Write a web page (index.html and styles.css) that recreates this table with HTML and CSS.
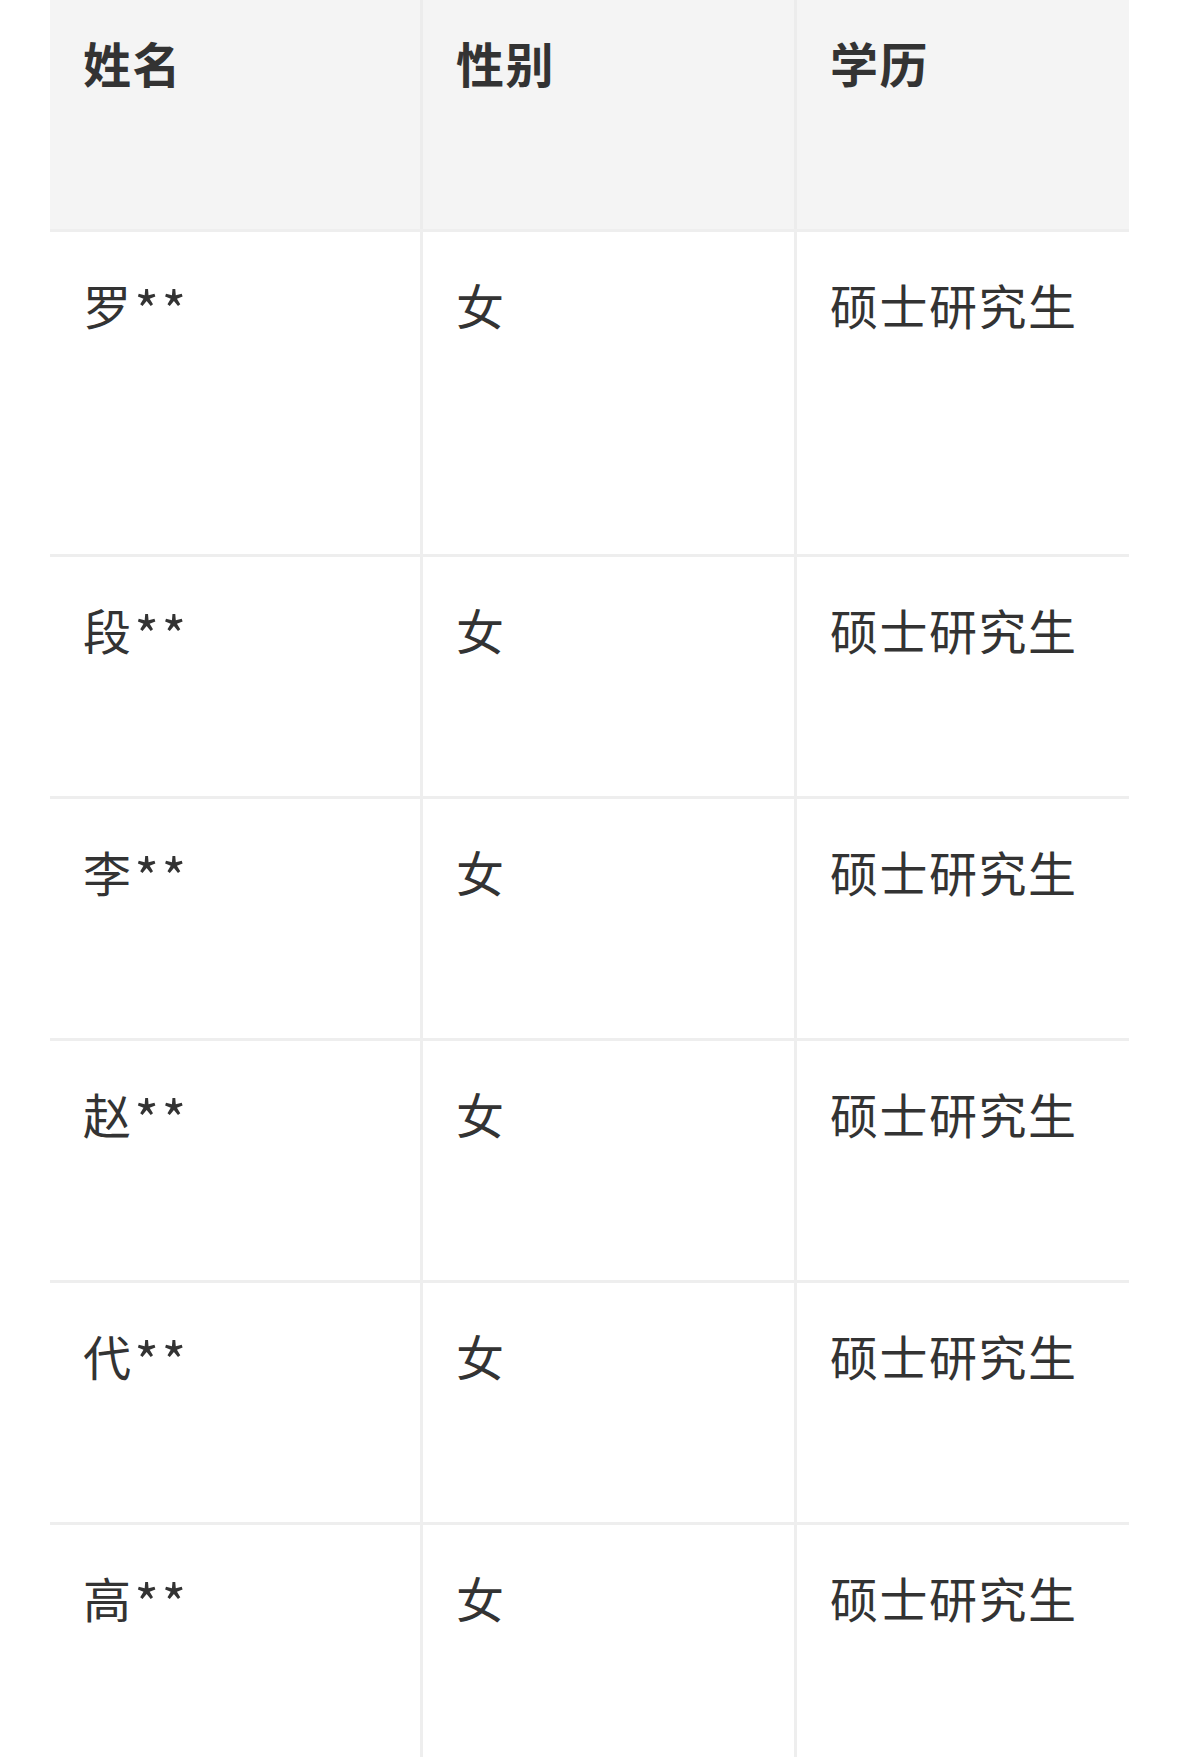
FILE: index.html
```html
<!DOCTYPE html>
<html lang="zh-CN">
<head>
<meta charset="utf-8">
<title>名单</title>
<link rel="stylesheet" href="styles.css">
</head>
<body>
<div class="page">
  <div class="table" role="table">
    <div class="row head" role="row">
      <div class="cell" role="columnheader">姓名</div>
      <div class="cell" role="columnheader">性别</div>
      <div class="cell" role="columnheader">学历</div>
    </div>
    <div class="row first" role="row">
      <div class="cell" role="cell">罗<span class="mask">**</span></div>
      <div class="cell" role="cell">女</div>
      <div class="cell" role="cell">硕士研究生</div>
    </div>
    <div class="row" role="row">
      <div class="cell" role="cell">段<span class="mask">**</span></div>
      <div class="cell" role="cell">女</div>
      <div class="cell" role="cell">硕士研究生</div>
    </div>
    <div class="row" role="row">
      <div class="cell" role="cell">李<span class="mask">**</span></div>
      <div class="cell" role="cell">女</div>
      <div class="cell" role="cell">硕士研究生</div>
    </div>
    <div class="row" role="row">
      <div class="cell" role="cell">赵<span class="mask">**</span></div>
      <div class="cell" role="cell">女</div>
      <div class="cell" role="cell">硕士研究生</div>
    </div>
    <div class="row" role="row">
      <div class="cell" role="cell">代<span class="mask">**</span></div>
      <div class="cell" role="cell">女</div>
      <div class="cell" role="cell">硕士研究生</div>
    </div>
    <div class="row" role="row">
      <div class="cell" role="cell">高<span class="mask">**</span></div>
      <div class="cell" role="cell">女</div>
      <div class="cell" role="cell">硕士研究生</div>
    </div>
  </div>
</div>
</body>
</html>
```
FILE: styles.css
```css
html, body {
  margin: 0;
  padding: 0;
  background: #ffffff;
  overflow: hidden;
}

.page {
  padding: 0 50px;
  font-family: "Noto Sans CJK SC", "Noto Sans", sans-serif;
  font-size: 48px;
  line-height: 1.5;
  letter-spacing: 1.5px;
  color: #333333;
}

.table {
  width: 1079px;
  display: flex;
  flex-direction: column;
}

.row {
  display: grid;
  grid-template-columns: 370px 374px 335px;
  height: 242px;
}

.row.first {
  height: 325px;
}

.row.head {
  height: 229px;
  background: #f4f4f4;
  font-weight: 700;
}

.cell {
  box-sizing: border-box;
  padding: 36px 33px 0 33px;
  border-top: 3px solid #eeeeee;
  border-left: 3px solid #eeeeee;
  white-space: nowrap;
}

.cell:first-child {
  border-left: none;
}

.row.head .cell {
  border-top: none;
  padding-top: 26px;
  border-left-color: #ececec;
}

.mask {
  padding-left: 2px;
  letter-spacing: 3px;
  font-size: 52px;
  vertical-align: -5px;
}
```
